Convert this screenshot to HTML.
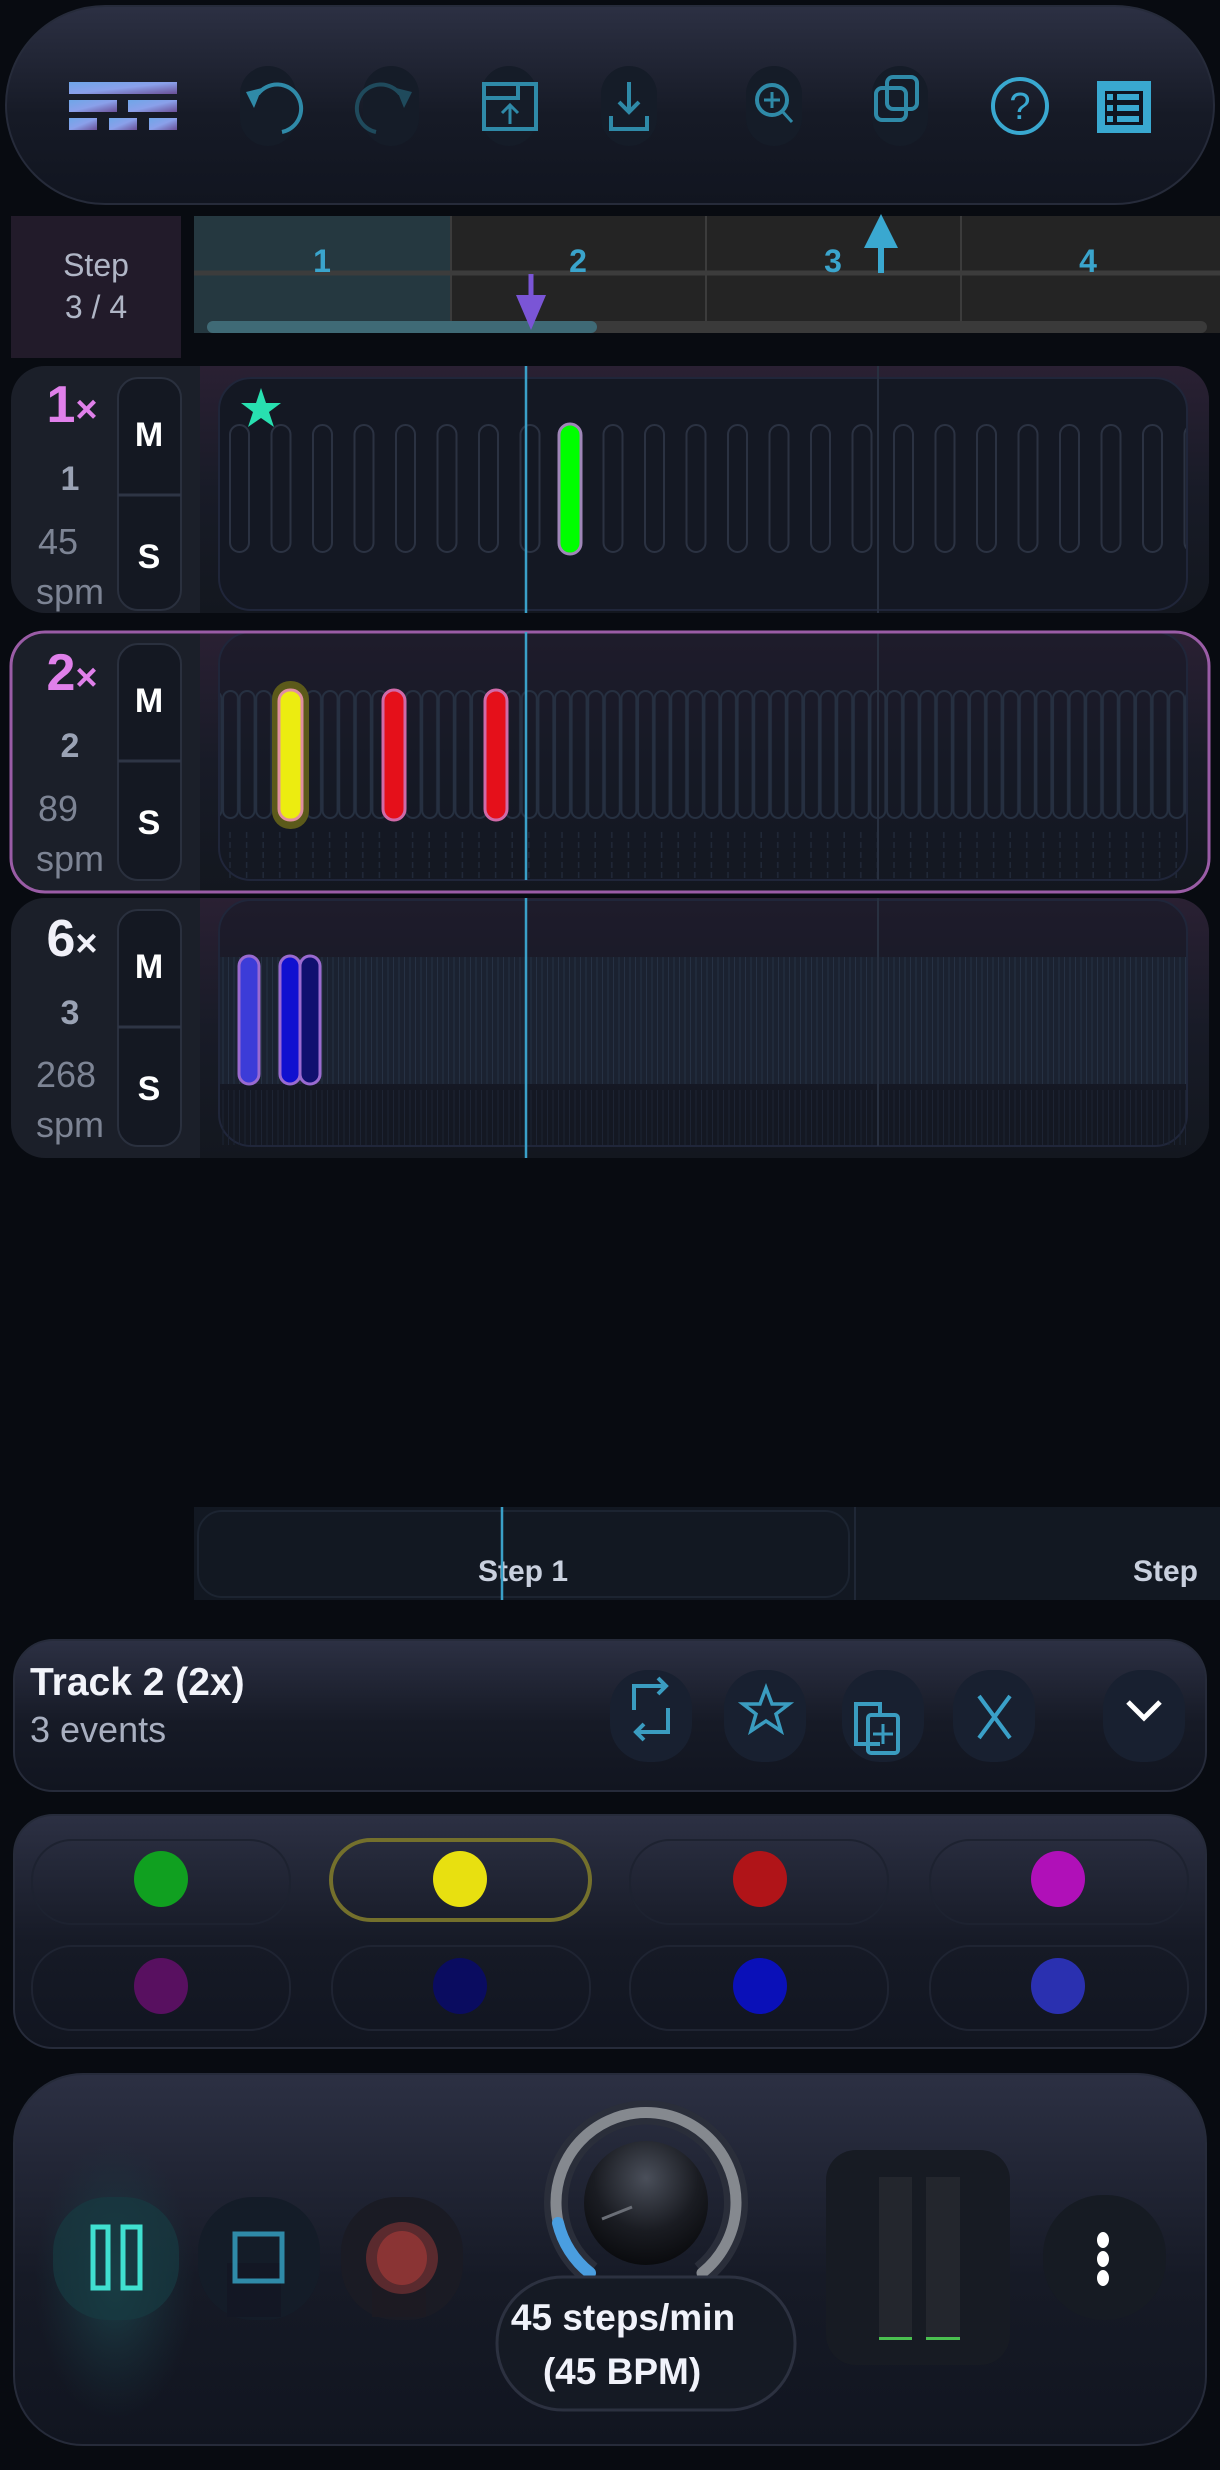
<!DOCTYPE html>
<html><head><meta charset="utf-8"><style>
*{box-sizing:border-box;margin:0;padding:0}
body{width:1220px;height:2470px;background:#080b11;position:relative;overflow:hidden;font-family:"Liberation Sans",sans-serif;color:#fff}
.abs{position:absolute}
.panel{position:absolute;background:linear-gradient(#2c3043,#161a26 55%,#111520);border:2px solid #262b3a}
</style></head><body>

<div class="panel" style="left:5px;top:5px;width:1210px;height:200px;border-radius:100px"></div>
<svg class="abs" style="left:0;top:0" width="1220" height="2470" viewBox="0 0 1220 2470">
<defs>
<linearGradient id="lg" x1="0" y1="0" x2="1" y2="1"><stop offset="0" stop-color="#6fa6e8"/><stop offset=".5" stop-color="#8aa0ea"/><stop offset="1" stop-color="#6a4f96"/></linearGradient>
<pattern id="p1" x="229" y="0" width="41.5" height="2470" patternUnits="userSpaceOnUse"><rect x="1" y="425" width="19" height="127" rx="9.5" fill="none" stroke="#2b3242" stroke-width="2"/></pattern>
<pattern id="p2" x="222" y="0" width="16.6" height="2470" patternUnits="userSpaceOnUse"><rect x="1" y="691" width="15" height="127" rx="7.5" fill="none" stroke="#263041" stroke-width="2"/><line x1="8" y1="832" x2="8" y2="878" stroke="#202838" stroke-width="1.5" stroke-dasharray="6 4"/></pattern>
<pattern id="p3" x="222" y="0" width="5.5" height="2470" patternUnits="userSpaceOnUse"><line x1="1" y1="957" x2="1" y2="1084" stroke="#263143" stroke-width="1"/><line x1="1" y1="1090" x2="1" y2="1145" stroke="#1d2433" stroke-width="1"/></pattern>
<linearGradient id="tg" x1="0" y1="0" x2="0" y2="1"><stop offset="0" stop-color="#2a2033"/><stop offset=".5" stop-color="#181b27"/><stop offset="1" stop-color="#13171f"/></linearGradient>
</defs>

<g fill="url(#lg)">
<rect x="69" y="82" width="108" height="12"/>
<rect x="69" y="100" width="48" height="12"/><rect x="128" y="100" width="49" height="12"/>
<rect x="69" y="118" width="28" height="12"/><rect x="109" y="118" width="28" height="12"/><rect x="149" y="118" width="28" height="12"/>
</g>
<g fill="#151c28">
<rect x="240" y="66" width="56" height="80" rx="28"/><rect x="363" y="66" width="56" height="80" rx="28"/>
<rect x="481" y="66" width="56" height="80" rx="28"/><rect x="601" y="66" width="56" height="80" rx="28"/>
<rect x="746" y="66" width="56" height="80" rx="28"/><rect x="872" y="66" width="56" height="80" rx="28"/>
</g>
<g fill="none" stroke="#3a9fc0" stroke-width="4">
<path d="M258 94 A24 24 0 1 1 282 132" stroke="#2f8aa8"/>
<path d="M246 92 L262 88 L254 108 Z" fill="#2f8aa8" stroke="none"/>
<path d="M400 94 A24 24 0 1 0 376 132" stroke="#1f4a5c"/>
<path d="M412 92 L396 88 L404 108 Z" fill="#1f4a5c" stroke="none"/>
<rect x="484" y="84" width="52" height="45" stroke="#2f8aa8"/>
<path d="M484 98 H518 V84" stroke="#2f8aa8"/>
<path d="M510 124 V106 M502 113 L510 105 L518 113" stroke="#2f8aa8" stroke-width="3"/>
<path d="M629 82 V110 M619 102 L629 112 L639 102" stroke="#2f8aa8"/>
<path d="M611 116 V129 H647 V116" stroke="#2f8aa8"/>
<circle cx="772" cy="100" r="15" stroke="#2f8aa8"/><path d="M782 111 L792 122 M772 92 V108 M764 100 H780" stroke="#2f8aa8" stroke-width="3"/>
<rect x="887" y="77" width="30" height="32" rx="6" stroke="#2f8aa8"/>
<rect x="876" y="88" width="30" height="32" rx="6" stroke="#2f8aa8"/>
<circle cx="1020" cy="106" r="27" stroke="#39a8d0"/>
<rect x="1099" y="83" width="50" height="48" stroke="#39a8d0" fill="#39a8d0"/>
</g>
<text x="1020" y="119" font-size="38" text-anchor="middle" fill="#39a8d0" font-family="Liberation Sans">?</text>
<g fill="#0f1420"><rect x="1105" y="91" width="38" height="34"/></g>
<g fill="#39a8d0"><rect x="1107" y="94" width="6" height="6"/><rect x="1117" y="94" width="22" height="6"/><rect x="1107" y="105" width="6" height="6"/><rect x="1117" y="105" width="22" height="6"/><rect x="1107" y="116" width="6" height="6"/><rect x="1117" y="116" width="22" height="6"/></g>

<rect x="11" y="216" width="170" height="142" fill="#221b2a"/>
<text x="96" y="276" font-size="32" text-anchor="middle" fill="#b0b6c6">Step</text>
<text x="96" y="318" font-size="32" text-anchor="middle" fill="#b0b6c6">3 / 4</text>
<rect x="194" y="216" width="1026" height="117" fill="#242424"/>
<rect x="194" y="216" width="257" height="117" fill="#253840"/>
<g stroke="#3c3c3c" stroke-width="2"><line x1="451" y1="216" x2="451" y2="333"/><line x1="706" y1="216" x2="706" y2="333"/><line x1="961" y1="216" x2="961" y2="333"/><line x1="194" y1="273" x2="1220" y2="273" stroke-width="5"/></g>
<g font-size="32" font-weight="bold" fill="#3aa4cc" text-anchor="middle"><text x="322" y="272">1</text><text x="578" y="272">2</text><text x="833" y="272">3</text><text x="1088" y="272">4</text></g>
<rect x="207" y="321" width="1000" height="12" rx="6" fill="#3a3a3a"/>
<rect x="207" y="321" width="390" height="12" rx="6" fill="#3f6a76"/>
<path d="M531 274 V300" stroke="#7a55d6" stroke-width="5"/><path d="M516 295 H546 L531 330 Z" fill="#7a55d6"/>
<path d="M881 273 V240" stroke="#3aa8d0" stroke-width="6"/><path d="M864 248 H898 L881 214 Z" fill="#3aa8d0"/>

<g>
<rect x="11" y="366" width="1198" height="247" rx="34" fill="#1b1f29"/>
<path d="M200 366 H1175 A34 34 0 0 1 1209 400 V579 A34 34 0 0 1 1175 613 H200 Z" fill="url(#tg)"/>
<rect x="219" y="378" width="968" height="232" rx="32" fill="#141823" stroke="#20263a" stroke-width="2"/>
<rect x="220" y="420" width="966" height="140" fill="url(#p1)"/>
<line x1="878" y1="366" x2="878" y2="613" stroke="#283040" stroke-width="2"/>
<rect x="118" y="378" width="63" height="232" rx="20" fill="#141822" stroke="#2a303e" stroke-width="2"/>
<line x1="118" y1="495" x2="181" y2="495" stroke="#2e3545" stroke-width="3"/>
<path d="M261 388 L266 403 L281 403 L269 412 L274 427 L261 418 L248 427 L253 412 L241 403 L256 403 Z" fill="#28e0b0"/>
<rect x="559" y="424" width="22" height="130" rx="11" fill="#0f0" stroke="#a086b8" stroke-width="3"/>
<line x1="526" y1="366" x2="526" y2="613" stroke="#3aa0c8" stroke-width="2.5"/>
</g>
<g>
<rect x="11" y="632" width="1198" height="260" rx="34" fill="#1b1f29"/>
<path d="M200 632 H1175 A34 34 0 0 1 1209 666 V858 A34 34 0 0 1 1175 892 H200 Z" fill="url(#tg)"/>
<rect x="219" y="632" width="968" height="248" rx="32" fill="#141823" fill-opacity=".5" stroke="#20263a" stroke-width="2"/>
<rect x="220" y="686" width="966" height="194" fill="url(#p2)"/>
<line x1="878" y1="632" x2="878" y2="880" stroke="#283040" stroke-width="2"/>
<rect x="11" y="632" width="1198" height="260" rx="34" fill="none" stroke="#9a5ca6" stroke-width="3"/>
<rect x="118" y="644" width="63" height="236" rx="20" fill="#141822" stroke="#2a303e" stroke-width="2"/>
<line x1="118" y1="761" x2="181" y2="761" stroke="#2e3545" stroke-width="3"/>
<rect x="272" y="681" width="37" height="148" rx="18" fill="#5c5a1a"/>
<rect x="279" y="690" width="23" height="130" rx="11" fill="#ecec10" stroke="#e08fa0" stroke-width="3"/>
<rect x="383" y="690" width="22" height="130" rx="11" fill="#e5101a" stroke="#d06aa8" stroke-width="3"/>
<rect x="485" y="690" width="22" height="130" rx="11" fill="#e5101a" stroke="#d06aa8" stroke-width="3"/>
<line x1="526" y1="632" x2="526" y2="880" stroke="#3aa0c8" stroke-width="2.5"/>
</g>
<g>
<rect x="11" y="898" width="1198" height="260" rx="34" fill="#1b1f29"/>
<path d="M200 898 H1175 A34 34 0 0 1 1209 932 V1124 A34 34 0 0 1 1175 1158 H200 Z" fill="url(#tg)"/>
<rect x="219" y="900" width="968" height="246" rx="32" fill="#141823" fill-opacity=".5" stroke="#20263a" stroke-width="2"/>
<rect x="220" y="957" width="966" height="127" fill="#1b2230"/>
<rect x="220" y="950" width="966" height="196" fill="url(#p3)"/>
<line x1="878" y1="898" x2="878" y2="1146" stroke="#283040" stroke-width="2"/>
<rect x="118" y="910" width="63" height="236" rx="20" fill="#141822" stroke="#2a303e" stroke-width="2"/>
<line x1="118" y1="1027" x2="181" y2="1027" stroke="#2e3545" stroke-width="3"/>
<rect x="239" y="956" width="20" height="128" rx="10" fill="#3c3cd8" stroke="#9a6ad0" stroke-width="3"/>
<rect x="280" y="956" width="20" height="128" rx="10" fill="#1010d0" stroke="#9a6ad0" stroke-width="3"/>
<rect x="300" y="956" width="20" height="128" rx="10" fill="#101070" stroke="#9a6ad0" stroke-width="3"/>
<line x1="526" y1="898" x2="526" y2="1158" stroke="#3aa0c8" stroke-width="2.5"/>
</g>
<g font-family="Liberation Sans" text-anchor="middle">
<text x="72" y="422" font-size="52" font-weight="bold" fill="#e080ea">1<tspan font-size="38">×</tspan></text>
<text x="70" y="490" font-size="34" font-weight="bold" fill="#9aa2b4">1</text>
<text x="58" y="554" font-size="36" fill="#7d8494">45</text>
<text x="70" y="604" font-size="36" fill="#7d8494">spm</text>
<text x="149" y="446" font-size="34" font-weight="bold" fill="#fff">M</text>
<text x="149" y="568" font-size="34" font-weight="bold" fill="#fff">S</text>

<text x="72" y="690" font-size="52" font-weight="bold" fill="#e080ea">2<tspan font-size="38">×</tspan></text>
<text x="70" y="757" font-size="34" font-weight="bold" fill="#9aa2b4">2</text>
<text x="58" y="821" font-size="36" fill="#7d8494">89</text>
<text x="70" y="871" font-size="36" fill="#7d8494">spm</text>
<text x="149" y="712" font-size="34" font-weight="bold" fill="#fff">M</text>
<text x="149" y="834" font-size="34" font-weight="bold" fill="#fff">S</text>

<text x="72" y="956" font-size="52" font-weight="bold" fill="#f0f0f8">6<tspan font-size="38">×</tspan></text>
<text x="70" y="1024" font-size="34" font-weight="bold" fill="#9aa2b4">3</text>
<text x="66" y="1087" font-size="36" fill="#7d8494">268</text>
<text x="70" y="1137" font-size="36" fill="#7d8494">spm</text>
<text x="149" y="978" font-size="34" font-weight="bold" fill="#fff">M</text>
<text x="149" y="1100" font-size="34" font-weight="bold" fill="#fff">S</text>
</g>

<rect x="194" y="1507" width="1026" height="93" fill="#121822"/>
<rect x="198" y="1511" width="651" height="86" rx="24" fill="none" stroke="#1c2431" stroke-width="2"/>
<line x1="855" y1="1507" x2="855" y2="1600" stroke="#1f2736" stroke-width="2"/>
<text x="523" y="1581" font-size="30" font-weight="bold" fill="#c9d0de" text-anchor="middle">Step 1</text>
<text x="1133" y="1581" font-size="30" font-weight="bold" fill="#c9d0de">Step</text>
<line x1="502" y1="1507" x2="502" y2="1600" stroke="#3aa0c8" stroke-width="2.5"/>
</svg>

<div class="panel" style="left:13px;top:1639px;width:1194px;height:153px;border-radius:40px"></div>
<div class="abs" style="left:30px;top:1661px;font-size:39px;font-weight:bold;color:#f2f4fa">Track 2 (2x)</div>
<div class="abs" style="left:30px;top:1709px;font-size:36px;color:#a8afc0">3 events</div>
<svg class="abs" style="left:0;top:1600px" width="1220" height="200">
<g fill="#182030"><rect x="610" y="70" width="82" height="92" rx="38"/><rect x="724" y="70" width="82" height="92" rx="38"/><rect x="842" y="70" width="82" height="92" rx="38"/><rect x="953" y="70" width="82" height="92" rx="38"/><rect x="1103" y="70" width="82" height="92" rx="38"/></g>
<g fill="none" stroke="#3a9cc0" stroke-width="4">
<path d="M634 110 V86 H666 M658 78 L666 86 L658 94"/>
<path d="M668 108 V132 H636 M644 124 L636 132 L644 140"/>
<path d="M766 88 L772 104 L789 104 L776 114 L781 131 L766 121 L751 131 L756 114 L743 104 L760 104 Z" stroke-width="3.5"/>
<path d="M880 144 H856 V104 H880 V114"/>
<rect x="868" y="115" width="30" height="38" rx="3"/>
<path d="M883 124 V144 M873 134 H893" stroke-width="3"/>
<path d="M979 96 L1010 138 M1010 96 L979 138" stroke="#3aa0c8"/>
</g>
<path d="M1128 102 L1144 118 L1160 102" fill="none" stroke="#fff" stroke-width="5"/>
</svg>

<div class="panel" style="left:13px;top:1814px;width:1194px;height:235px;border-radius:40px"></div>
<svg class="abs" style="left:0;top:1800px" width="1220" height="260">
<g fill="none" stroke="#1f2432" stroke-width="2">
<rect x="32" y="40" width="258" height="84" rx="40" stroke="#1d2230"/><rect x="930" y="40" width="258" height="84" rx="40" stroke="#1d2230"/><rect x="630" y="40" width="258" height="84" rx="40" stroke="#1d2230"/>
<rect x="32" y="146" width="258" height="84" rx="40"/><rect x="332" y="146" width="258" height="84" rx="40"/><rect x="630" y="146" width="258" height="84" rx="40"/><rect x="930" y="146" width="258" height="84" rx="40"/>
</g>
<rect x="331" y="40" width="259" height="80" rx="40" fill="none" stroke="#74702c" stroke-width="4"/>
<ellipse cx="161" cy="79" rx="27" ry="28" fill="#10a020"/>
<ellipse cx="460" cy="79" rx="27" ry="28" fill="#e8e010"/>
<ellipse cx="760" cy="79" rx="27" ry="28" fill="#b01418"/>
<ellipse cx="1058" cy="79" rx="27" ry="28" fill="#b010b8"/>
<ellipse cx="161" cy="186" rx="27" ry="28" fill="#581060"/>
<ellipse cx="460" cy="186" rx="27" ry="28" fill="#0a0c60"/>
<ellipse cx="760" cy="186" rx="27" ry="28" fill="#0a10b8"/>
<ellipse cx="1058" cy="186" rx="27" ry="28" fill="#2a30b0"/>
</svg>

<div class="panel" style="left:13px;top:2073px;width:1194px;height:373px;border-radius:70px"></div>
<svg class="abs" style="left:0;top:2060px" width="1220" height="410">
<defs>
<radialGradient id="tgl" cx=".5" cy=".5" r=".5"><stop offset="0" stop-color="#1f5258" stop-opacity=".7"/><stop offset="1" stop-color="#1a3a44" stop-opacity="0"/></radialGradient>
<radialGradient id="kn2" cx=".5" cy=".3" r=".7"><stop offset="0" stop-color="#4a4f5a"/><stop offset=".6" stop-color="#1a1c22"/><stop offset="1" stop-color="#0a0b0e"/></radialGradient>
</defs>
<ellipse cx="115" cy="220" rx="80" ry="140" fill="url(#tgl)"/>
<rect x="53" y="137" width="126" height="123" rx="55" fill="#173a42" opacity=".7"/>
<g fill="none" stroke="#40e0d0" stroke-width="5"><rect x="93" y="167" width="15" height="61"/><rect x="123" y="167" width="17" height="61"/></g>
<rect x="198" y="137" width="122" height="123" rx="55" fill="#141c28"/>
<rect x="227" y="203" width="54" height="54" fill="#131724"/>
<rect x="235" y="174" width="47" height="47" fill="none" stroke="#2f8aa8" stroke-width="5"/>
<rect x="341" y="137" width="122" height="123" rx="55" fill="#1a1b24"/>
<rect x="372" y="203" width="54" height="54" fill="#1c1a22"/>
<ellipse cx="402" cy="198" rx="36" ry="36" fill="#5a2a2e"/>
<ellipse cx="402" cy="198" rx="25" ry="27" fill="#8a3434"/>
<path d="M590 213 A90 90 0 1 1 702 213" fill="none" stroke="#2a2e3a" stroke-width="24"/>
<path d="M590 213 A90 90 0 1 1 702 213" fill="none" stroke="#85898f" stroke-width="11" stroke-linecap="round"/>
<path d="M590 213 A90 90 0 0 1 558 163" fill="none" stroke="#4a9ee0" stroke-width="12" stroke-linecap="round"/>
<circle cx="646" cy="143" r="62" fill="url(#kn2)"/>
<line x1="632" y1="147" x2="602" y2="159" stroke="#6a6e76" stroke-width="3"/>
<rect x="497" y="217" width="298" height="133" rx="66" fill="#151a24" stroke="#2c3140" stroke-width="3"/>
<text x="623" y="270" font-size="37" font-weight="bold" fill="#f0f2fa" text-anchor="middle" font-family="Liberation Sans">45 steps/min</text>
<text x="622" y="324" font-size="37" font-weight="bold" fill="#f0f2fa" text-anchor="middle" font-family="Liberation Sans">(45 BPM)</text>
<rect x="826" y="90" width="184" height="215" rx="30" fill="#171b23"/>
<rect x="879" y="117" width="33" height="163" fill="#23262d"/>
<rect x="926" y="117" width="34" height="163" fill="#23262d"/>
<rect x="879" y="277" width="33" height="3" fill="#4ac050"/><rect x="926" y="277" width="34" height="3" fill="#4ac050"/>
<rect x="1043" y="135" width="123" height="125" rx="60" fill="#161b23"/>
<g fill="#fff"><ellipse cx="1103" cy="180" rx="6" ry="8"/><ellipse cx="1103" cy="199" rx="6" ry="8"/><ellipse cx="1103" cy="218" rx="6" ry="8"/></g>
</svg>
</body></html>
